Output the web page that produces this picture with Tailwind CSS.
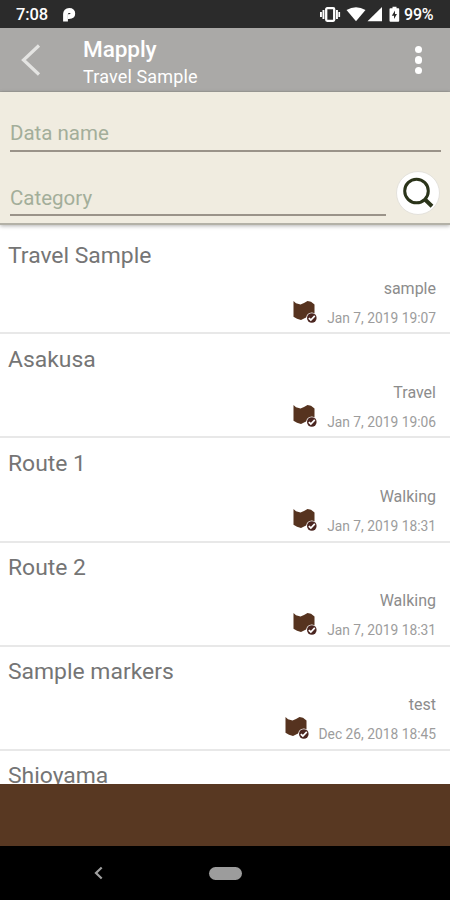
<!DOCTYPE html>
<html lang="en">
<head>
  <meta charset="UTF-8" />
  <meta name="viewport" content="width=device-width, initial-scale=1.0" />
  <title>Mapply</title>
  <script src="https://cdn.jsdelivr.net/npm/@tailwindcss/browser@4"></script>
</head>
<body class="bg-black font-[Roboto,sans-serif]">

  <!-- Shared map icon -->
  <svg class="hidden">
    <symbol id="map" viewBox="0 0 25 25">
      <path fill="#56331f" d="M0.500 1 3 3.200 7.500 4.500 11 3 14.500 1 18 1.800 21.500 4.500V18L14 17 8 20 4 18.800 0.500 16.800Z" />
      <circle cx="18.800" cy="18" r="5.600" fill="#fff" />
      <circle cx="18.800" cy="18" r="4.800" fill="#4a2520" />
      <path d="M15.800 18.200 17.800 20 21.800 15.800" fill="none" stroke="#fff" stroke-width="1.700" />
    </symbol>
  </svg>

  <div class="flex h-[900px] w-[450px] flex-col overflow-hidden">

    <!-- Status bar -->
    <div class="flex h-[28px] shrink-0 items-center bg-[#2b2b2b] pt-[2px] pl-[16px] text-[16.500px] font-medium text-white">
      <span class="w-[47px] pt-px tracking-[-0.1px]">7:08</span>
      <svg class="h-[14px] w-[13px]" viewBox="0 0 13 14">
        <path d="M2.500 13.500V6Q2.500 2.500 6.200 2.500T9.800 5.600Q9.800 8.600 6 8.600H5" fill="none" stroke="#fff" stroke-width="4.800" />
      </svg>
      <svg class="ml-[244px] h-[18px] w-[80px]" viewBox="0 0 80 18" fill="#fff">
        <path d="M0 6h1.900v5H0zM2.500 4h1.900v9H2.500zM16 4h1.900v9H16zM18.400 6h1.700v5h-1.700z" />
        <rect x="6.200" y="2.200" width="8" height="12.600" rx="1" fill="none" stroke="#fff" stroke-width="2.300" />
        <path d="M26.500 4Q36-1.500 45.500 4L36 15.300Z" />
        <path d="M62 1V15.300H47.500Z" />
        <path d="M70.500 2.200h2V.7h4v1.500h2Q79.200 2.200 79.200 3V14.700Q79.200 15.700 78.200 15.700H70.500Q69.500 15.700 69.500 14.700V3Q69.500 2.200 70.500 2.200Z" />
        <path d="M75 4.500 71.800 9.800h2.200V13L77 8h-2Z" fill="#2b2b2b" />
      </svg>
      <span class="ml-[4px] text-[16px] tracking-[-0.2px]">99%</span>
    </div>

    <!-- App bar -->
    <header class="flex h-[64px] shrink-0 items-center border-b border-[#a2a19d] bg-[#aaa9a7] text-white">
      <svg class="ml-[20px] h-[34px] w-[22px]" viewBox="0 0 22 34" fill="none" stroke="#e4e4e2" stroke-width="3.200">
        <path d="M19 2.500 3.500 17 19 31.500" />
      </svg>
      <div class="ml-[41px] pt-[6px]">
        <h1 class="text-[22.600px] leading-[28px] font-medium tracking-[-0.1px]">Mapply</h1>
        <p class="text-[18px] leading-[26px] tracking-[0.15px]">Travel Sample</p>
      </div>
      <div class="mr-[28px] ml-auto flex flex-col gap-[3px] pt-px">
        <i class="size-[7.500px] rounded-full bg-white"></i>
        <i class="size-[7.500px] rounded-full bg-white"></i>
        <i class="size-[7.500px] rounded-full bg-white"></i>
      </div>
    </header>

    <!-- Search form -->
    <div class="z-10 h-[133px] shrink-0 border-b-2 border-[#b3b1a7] bg-[#f0ece0] px-[10px] text-[20.500px] text-[#a3ae9a] shadow-[0_1px_4px_rgba(0,0,0,0.3)]">
      <div class="h-[60px] w-[431px] border-b-2 border-[#9a9389] pt-[26px] leading-[30px]">Data name</div>
      <div class="flex">
        <div class="h-[64px] w-[376px] border-b-2 border-[#9a9389] pt-[31px] leading-[30px]">Category</div>
        <div class="mt-[19px] ml-[10px] flex size-[44px] items-center justify-center rounded-full border border-[#e4e2dc] bg-white">
          <svg class="size-[34px]" viewBox="0 0 34 34" fill="none" stroke="#2b341a">
            <circle cx="15.500" cy="15" r="11.800" stroke-width="3" />
            <path d="M24 23.500 31 30.200" stroke-width="4" />
          </svg>
        </div>
      </div>
    </div>

    <!-- Data list -->
    <main class="h-[559px] shrink-0 overflow-hidden bg-white pt-[5px] text-[#757575]">
      <div class="flex h-[104.2px] flex-col border-b-2 border-[#e8e8e8] pr-[14px] pl-[8px]">
        <h2 class="pt-[10.500px] text-[22.900px] leading-[30px]">Travel Sample</h2>
        <p class="mt-[6px] text-right text-[16px] leading-[24px] text-[#8c8c8c]">sample</p>
        <p class="flex items-center justify-end gap-[9px] text-[13.800px] leading-[25px] text-[#9c9c9c]"><svg class="-mt-[7px] size-[25px]"><use href="#map" /></svg><span class="pt-[5px]">Jan 7, 2019 19:07</span></p>
      </div>
      <div class="flex h-[104.2px] flex-col border-b-2 border-[#e8e8e8] pr-[14px] pl-[8px]">
        <h2 class="pt-[10.500px] text-[22.900px] leading-[30px]">Asakusa</h2>
        <p class="mt-[6px] text-right text-[16px] leading-[24px] text-[#8c8c8c]">Travel</p>
        <p class="flex items-center justify-end gap-[9px] text-[13.800px] leading-[25px] text-[#9c9c9c]"><svg class="-mt-[7px] size-[25px]"><use href="#map" /></svg><span class="pt-[5px]">Jan 7, 2019 19:06</span></p>
      </div>
      <div class="flex h-[104.2px] flex-col border-b-2 border-[#e8e8e8] pr-[14px] pl-[8px]">
        <h2 class="pt-[10.500px] text-[22.900px] leading-[30px]">Route 1</h2>
        <p class="mt-[6px] text-right text-[16px] leading-[24px] text-[#8c8c8c]">Walking</p>
        <p class="flex items-center justify-end gap-[9px] text-[13.800px] leading-[25px] text-[#9c9c9c]"><svg class="-mt-[7px] size-[25px]"><use href="#map" /></svg><span class="pt-[5px]">Jan 7, 2019 18:31</span></p>
      </div>
      <div class="flex h-[104.2px] flex-col border-b-2 border-[#e8e8e8] pr-[14px] pl-[8px]">
        <h2 class="pt-[10.500px] text-[22.900px] leading-[30px]">Route 2</h2>
        <p class="mt-[6px] text-right text-[16px] leading-[24px] text-[#8c8c8c]">Walking</p>
        <p class="flex items-center justify-end gap-[9px] text-[13.800px] leading-[25px] text-[#9c9c9c]"><svg class="-mt-[7px] size-[25px]"><use href="#map" /></svg><span class="pt-[5px]">Jan 7, 2019 18:31</span></p>
      </div>
      <div class="flex h-[104.2px] flex-col border-b-2 border-[#e8e8e8] pr-[14px] pl-[8px]">
        <h2 class="pt-[10.500px] text-[22.900px] leading-[30px]">Sample markers</h2>
        <p class="mt-[6px] text-right text-[16px] leading-[24px] text-[#8c8c8c]">test</p>
        <p class="flex items-center justify-end gap-[9px] text-[13.800px] leading-[25px] text-[#9c9c9c]"><svg class="-mt-[7px] size-[25px]"><use href="#map" /></svg><span class="pt-[5px]">Dec 26, 2018 18:45</span></p>
      </div>
      <h2 class="pt-[10px] pl-[8px] text-[22.900px] leading-[30px]">Shioyama</h2>
    </main>

    <!-- Ad area -->
    <div class="h-[62px] shrink-0 bg-[#583822]"></div>

    <!-- System navigation -->
    <nav class="flex h-[54px] shrink-0 items-center bg-black">
      <svg class="ml-[94px] h-[14px] w-[9px]" viewBox="0 0 9 14" fill="none" stroke="#a0a0a0" stroke-width="2.200">
        <path d="M7.700 1.500 2 7 7.700 12.500" />
      </svg>
      <div class="ml-[106px] h-[13px] w-[33px] rounded-full bg-[#9c9c9c]"></div>
    </nav>

  </div>
</body>
</html>
